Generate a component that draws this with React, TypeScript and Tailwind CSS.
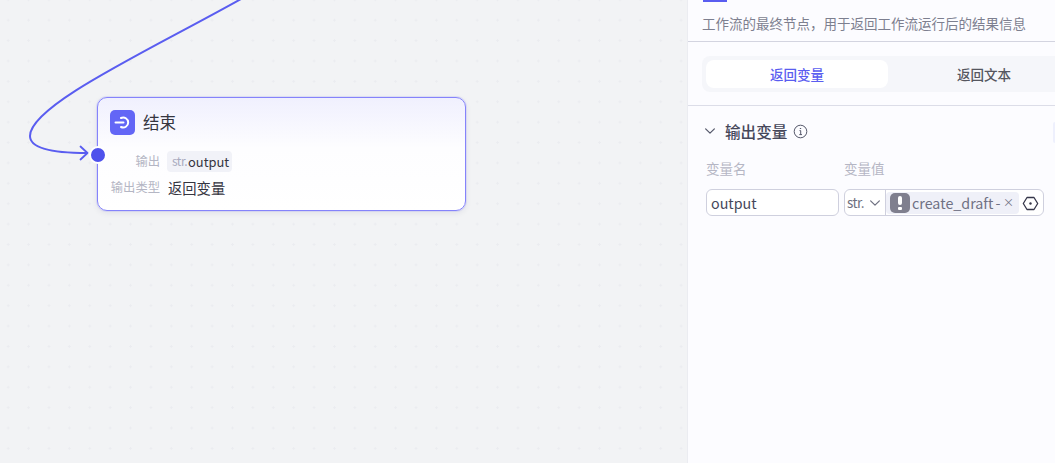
import React from "react";

function Chevron({ className }: { className?: string }) {
  return (
    <svg className={className} viewBox="0 0 16 16" fill="none" stroke="currentColor" strokeWidth="1.4" strokeLinecap="round" strokeLinejoin="round">
      <path d="M3 5.5 L8 10.5 L13 5.5" />
    </svg>
  );
}

export default function App() {
  return (
    <div className="flex h-[463px] w-[1055px] overflow-hidden font-['Noto_Sans_CJK_SC','Noto_Sans',sans-serif] bg-[#f2f3f5]">
      <div className="relative h-full w-[687px] shrink-0 bg-[radial-gradient(circle,#ebecf0_1px,transparent_1.2px)] bg-[size:20.4px_20.4px] bg-[position:-2px_10px]">
        <svg className="absolute left-0 top-0" width="300" height="200" fill="none">
          <path d="M241 -1 C 150 50, 30 105, 30 136 C 30 149, 55 153, 87 153" stroke="#5a5df0" strokeWidth="2" />
          <path d="M80.5 146.5 L87.5 153 L80.5 159.5" stroke="#5a5df0" strokeWidth="1.8" strokeLinecap="round" strokeLinejoin="round" />
        </svg>
        <div className="absolute left-[97px] top-[97px] h-[114px] w-[369px] rounded-[10px] border border-[#8583fb] bg-[linear-gradient(180deg,#f0f0fe_0%,#fdfdff_45%,#ffffff_100%)] shadow-[0_0_0_1px_rgba(150,148,252,0.2),0_2px_6px_rgba(30,30,80,0.08)]">
          <div className="flex items-center pl-[12px] pt-[12px]">
            <div className="flex h-[25px] w-[25px] items-center justify-center rounded-[5px] bg-[#6366f6]">
              <svg width="17" height="17" viewBox="0 0 17 17" fill="none" stroke="#fff" strokeWidth="2" strokeLinecap="round">
                <path d="M1.5 8.5 H9.5" />
                <path d="M7 4 A5 5 0 1 1 7 13" />
              </svg>
            </div>
            <span className="ml-[8px] text-[16.5px] leading-[25px] text-[#35353f]">结束</span>
          </div>
          <div className="mt-[16px] flex items-center">
            <span className="w-[62px] text-right text-[12.3px] leading-[21px] text-[#b4b6c4]">输出</span>
            <div className="ml-[7px] flex h-[21px] items-center rounded-[4px] bg-[#f1f2f8] pl-[5px] pr-[3px]">
              <span className="mb-[2px] mr-[1px] w-[15px] overflow-hidden text-[12px] leading-[15px] tracking-[-0.5px] text-[#a9abbf]">str.</span>
              <span className="text-[12.9px] leading-[21px] text-[#35353f]">output</span>
            </div>
          </div>
          <div className="mt-[5px] flex items-center">
            <span className="w-[62px] text-right text-[12.3px] leading-[21px] text-[#b4b6c4]">输出类型</span>
            <span className="ml-[8px] text-[14.3px] leading-[21px] text-[#35353f]">返回变量</span>
          </div>
          <div className="absolute left-[-9px] top-[48px] h-[18px] w-[18px] rounded-full border-[2px] border-white bg-[#4f52ec]" />
        </div>
      </div>

      <div className="relative h-full w-[368px] shrink-0 overflow-hidden border-l border-[#ebecf1] bg-[#fcfcff]">
        <div className="ml-[15px] h-[2px] w-[24px] bg-[#5a5df0]" />
        <div className="h-[40px] border-b border-[#d3d4e0] pl-[14px] pt-[12px] text-[13.5px] leading-[19px] text-[#7d7f8f]">
          工作流的最终节点，用于返回工作流运行后的结果信息
        </div>
        <div className="h-[64px] border-b border-[#dcdde8] pl-[14px] pt-[14px]">
          <div className="flex h-[36px] w-[380px] rounded-[8px] bg-[#f5f6fa] p-[4px]">
            <div className="flex h-[28px] w-[182px] shrink-0 items-center justify-center rounded-[8px] bg-white text-[13.5px] font-medium text-[#5a5df0]">返回变量</div>
            <div className="flex h-[28px] w-[192px] shrink-0 items-center justify-center text-[13.5px] font-medium text-[#55565f]">返回文本</div>
          </div>
        </div>
        <div className="flex items-center pl-[15px] pt-[13px]">
          <Chevron className="h-[14px] w-[14px] text-[#55586a]" />
          <span className="ml-[8px] text-[15.6px] leading-[24px] font-medium text-[#45475a]">输出变量</span>
          <svg className="ml-[6px]" width="15" height="15" viewBox="0 0 15 15" fill="none" stroke="#55586a" strokeWidth="1">
            <circle cx="7.5" cy="7.5" r="6.3" />
            <path d="M6.5 6.6 H7.7 V10.6 M6.3 10.6 H9" />
            <path d="M7.5 4 V5" strokeWidth="1.3" />
          </svg>
        </div>
        <div className="absolute right-0 top-[122px] h-[21px] w-[2px] rounded-l-[3px] bg-[#eef0fd]" />
        <div className="flex pl-[18px] pt-[16px] text-[13.5px] leading-[18px] text-[#b5b6c4]">
          <span className="w-[138px]">变量名</span>
          <span>变量值</span>
        </div>
        <div className="flex pl-[18px] pt-[12px]">
          <div className="flex h-[27px] w-[133px] items-center rounded-[6px] border border-[#cfd0de] bg-white pl-[4px] text-[14.3px] text-[#45475a]">output</div>
          <div className="ml-[5px] flex h-[27px] w-[200px] items-center rounded-[6px] border border-[#cfd0de] bg-white">
            <div className="flex h-full w-[41px] shrink-0 items-center border-r border-[#cfd0de] pl-[2px] text-[#6e7080]">
              <span className="mb-[1px] text-[13.5px] tracking-[-0.6px]">str.</span>
              <Chevron className="ml-[4px] h-[14px] w-[14px]" />
            </div>
            <div className="mt-[1px] flex h-[22px] w-[133px] shrink-0 items-center rounded-[4px] bg-[#eff0f8]">
              <div className="relative ml-[4px] h-[20px] w-[20px] shrink-0 rounded-[5px] bg-[#7f7f8e]">
                <div className="absolute left-[8px] top-[3px] h-[9px] w-[4px] rounded-[2px] bg-white" />
                <div className="absolute left-[8px] top-[14px] h-[3px] w-[4px] rounded-[1px] bg-white" />
              </div>
              <span className="ml-[2px] w-[91px] overflow-hidden whitespace-nowrap text-[14.3px] leading-[20px] [word-spacing:-1px] text-[#6f7184]">create_draft - output</span>
              <span className="mb-[3px] text-[11px] leading-[20px] text-[#6f7184]">×</span>
            </div>
            <svg className="ml-[3px] mt-[1px]" width="17" height="17" viewBox="0 0 17 17" fill="none" stroke="#35364a" strokeWidth="1.3">
              <path d="M5 2.5 H12 L15.7 8.5 L12 14.5 H5 L1.3 8.5 Z" strokeLinejoin="round" />
              <circle cx="8.5" cy="8.5" r="1.2" fill="#35364a" stroke="none" />
            </svg>
          </div>
        </div>
      </div>
    </div>
  );
}
